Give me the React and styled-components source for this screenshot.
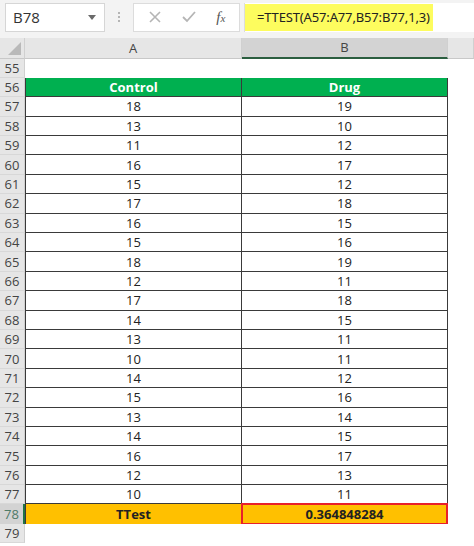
import React from "react";
import styled, { createGlobalStyle, css } from "styled-components";

const GlobalStyle = createGlobalStyle`
  html, body {
    margin: 0;
    padding: 0;
    background: #ffffff;
  }
  body {
    font-family: "Open Sans", "Liberation Sans", sans-serif;
    overflow: hidden;
  }
`;

const Page = styled.div`
  width: 474px;
  height: 546px;
  overflow: hidden;
  background: #ffffff;
`;

const FormulaBar = styled.div`
  display: flex;
  align-items: center;
  height: 38px;
  padding: 0 0 0 5px;
  box-sizing: border-box;
  background: #f3f3f3;
`;

const NameBox = styled.div`
  display: flex;
  align-items: center;
  justify-content: space-between;
  width: 100px;
  height: 29px;
  margin-top: -4px;
  padding: 0 8px 0 7px;
  box-sizing: border-box;
  background: #ffffff;
  border: 1px solid #d6d6d6;
  font-size: 15px;
  color: #333333;
`;

const Caret = styled.span`
  width: 0;
  height: 0;
  border-left: 4px solid transparent;
  border-right: 4px solid transparent;
  border-top: 5px solid #6a6a6a;
`;

const Grip = styled.div`
  display: flex;
  flex-direction: column;
  gap: 2px;
  width: 28px;
  align-items: center;
  margin-top: -4px;
  span {
    width: 2px;
    height: 2px;
    background: #b5b5b5;
  }
`;

const ButtonGroup = styled.div`
  display: flex;
  align-items: center;
  justify-content: space-around;
  width: 107px;
  height: 29px;
  margin-top: -4px;
  padding: 0 4px;
  box-sizing: border-box;
  background: #ffffff;
  border: 1px solid #dcdcdc;
  color: #b8b8b8;
`;

const Fx = styled.span`
  font-family: "Liberation Serif", serif;
  font-style: italic;
  font-size: 15px;
  color: #555555;
  sub {
    font-size: 11px;
    vertical-align: baseline;
  }
`;

const FormulaInput = styled.div`
  flex: 1;
  display: flex;
  align-items: center;
  height: 29px;
  margin: -4px 0 0 4px;
  background: #ffffff;
  border-left: 1px solid #dcdcdc;
`;

const Highlight = styled.span`
  display: flex;
  align-items: center;
  height: 27px;
  padding: 0 3px 0 12px;
  box-sizing: border-box;
  background: #fdfc5e;
  font-family: "Noto Sans", sans-serif;
  font-size: 13px;
  letter-spacing: -0.15px;
  white-space: nowrap;
  color: #222222;
`;

const Sheet = styled.div`
  display: flex;
  flex-direction: column;
`;

const Row = styled.div`
  display: grid;
  grid-template-columns: 25px 217px 206px 1fr;
  height: ${(p) => p.$h || 19.4}px;
  box-sizing: border-box;
`;

const Corner = styled.div`
  background: #e6e6e6;
  border-right: 1px solid #d0d0d0;
  border-bottom: 1px solid #c8c8c8;
  position: relative;
  &::after {
    content: "";
    position: absolute;
    right: 3px;
    bottom: 3px;
    border-left: 13px solid transparent;
    border-bottom: 13px solid #b9b9b9;
  }
`;

const ColHead = styled.div`
  display: flex;
  align-items: center;
  justify-content: center;
  font-size: 13px;
  color: #444444;
  background: ${(p) => (p.$selected ? "#d3d3d3" : "#e6e6e6")};
  border-right: 1px solid #d0d0d0;
  border-bottom: ${(p) => (p.$selected ? "2px solid #2b5e3f" : "1px solid #c8c8c8")};
  box-sizing: border-box;
`;

const RowHead = styled.div`
  display: flex;
  align-items: center;
  justify-content: center;
  font-size: 13px;
  color: ${(p) => (p.$selected ? "#4f7a68" : "#444444")};
  background: ${(p) => (p.$selected ? "#d3d3d3" : "#e6e6e6")};
  border-right: ${(p) => (p.$selected ? "2px solid #217346" : "1px solid #d0d0d0")};
  border-bottom: 1px solid #d8d8d8;
  box-sizing: border-box;
`;

const fills = {
  head: css`
    background: #00b050;
    color: #ffffff;
    font-weight: 700;
  `,
  total: css`
    background: #ffc000;
    color: #222222;
    font-weight: 700;
  `,
  data: css`
    background: #ffffff;
    color: #222222;
  `,
};

const Cell = styled.div`
  display: flex;
  align-items: center;
  justify-content: center;
  font-size: 13px;
  box-sizing: border-box;
  border-right: 1px solid #3a3a3a;
  border-bottom: 1px solid #3a3a3a;
  ${(p) => p.$first && "border-left: 1px solid #3a3a3a;"}
  ${(p) => fills[p.$kind || "data"]}
  ${(p) =>
    p.$active &&
    css`
      border: 2px solid #e8202a;
      margin: -1px 0 0 -1px;
    `}
`;

const Blank = styled.div`
  background: #ffffff;
`;

const data = [
  [18, 19], [13, 10], [11, 12], [16, 17], [15, 12], [17, 18], [16, 15],
  [15, 16], [18, 19], [12, 11], [17, 18], [14, 15], [13, 11], [10, 11],
  [14, 12], [15, 16], [13, 14], [14, 15], [16, 17], [12, 13], [10, 11],
];

export default function App() {
  return (
    <Page>
      <GlobalStyle />
      <FormulaBar>
        <NameBox>
          B78
          <Caret />
        </NameBox>
        <Grip>
          <span />
          <span />
          <span />
        </Grip>
        <ButtonGroup>
          <svg width="14" height="14" viewBox="0 0 14 14">
            <path d="M2 2 L12 12 M12 2 L2 12" stroke="#b5b5b5" strokeWidth="1.6" fill="none" />
          </svg>
          <svg width="16" height="14" viewBox="0 0 16 14">
            <path d="M2 7 L6 11 L14 2" stroke="#b5b5b5" strokeWidth="1.8" fill="none" />
          </svg>
          <Fx>
            f<sub>x</sub>
          </Fx>
        </ButtonGroup>
        <FormulaInput>
          <Highlight>=TTEST(A57:A77,B57:B77,1,3)</Highlight>
        </FormulaInput>
      </FormulaBar>
      <Sheet>
        <Row $h={20.5}>
          <Corner />
          <ColHead>A</ColHead>
          <ColHead $selected>B</ColHead>
          <ColHead />
        </Row>
        <Row>
          <RowHead>55</RowHead>
          <Blank />
          <Blank />
          <Blank />
        </Row>
        <Row>
          <RowHead>56</RowHead>
          <Cell $kind="head" $first>Control</Cell>
          <Cell $kind="head">Drug</Cell>
          <Blank />
        </Row>
        {data.map(([a, b], i) => (
          <Row key={i}>
            <RowHead>{57 + i}</RowHead>
            <Cell $first>{a}</Cell>
            <Cell>{b}</Cell>
            <Blank />
          </Row>
        ))}
        <Row>
          <RowHead $selected>78</RowHead>
          <Cell $kind="total" $first>TTest</Cell>
          <Cell $kind="total" $active>0.364848284</Cell>
          <Blank />
        </Row>
        <Row>
          <RowHead>79</RowHead>
          <Blank />
          <Blank />
          <Blank />
        </Row>
      </Sheet>
    </Page>
  );
}
